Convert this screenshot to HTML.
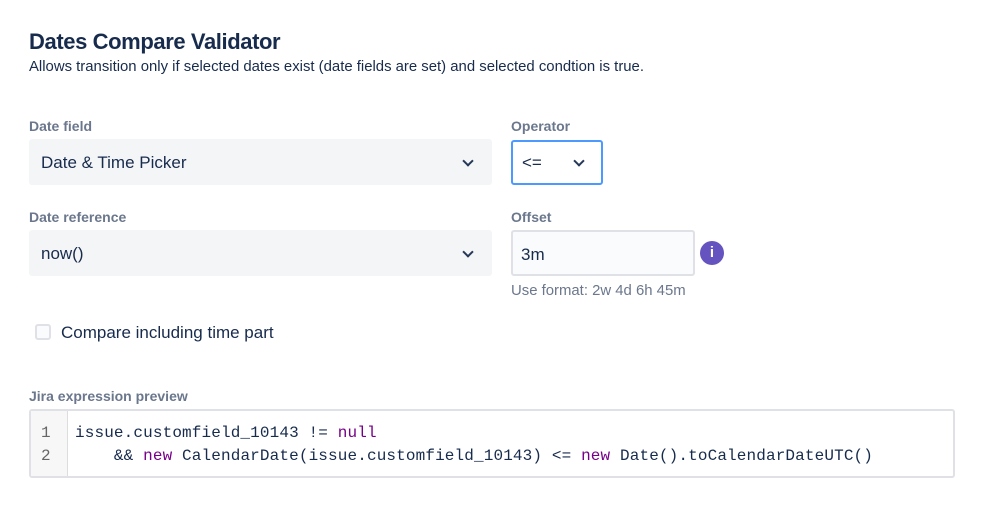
<!DOCTYPE html>
<html><head><style>
body{margin:0;background:#fff;font-family:"Liberation Sans",sans-serif;color:#172b4d;width:999px;height:515px;overflow:hidden;position:relative}
.a{position:absolute}
.lbl{font-size:14px;font-weight:bold;color:#6b778c}
.sel{background:#f4f5f7;border-radius:3px}
.chev{position:absolute;width:6px;height:6px;border-right:2px solid #253858;border-bottom:2px solid #253858;transform:rotate(45deg)}
.code{font-family:"Liberation Mono",monospace;font-size:16px;letter-spacing:0.13px}
.kw{color:#770088}
</style></head><body>
<div class="a" style="left:29px;top:29px;font-size:22px;font-weight:bold;color:#172b4d;letter-spacing:-0.4px">Dates Compare Validator</div>
<div class="a" style="left:29px;top:59px;font-size:14.9px">Allows transition only if selected dates exist (date fields are set) and selected condtion is true.</div>

<div class="a lbl" style="left:29px;top:118px">Date field</div>
<div class="a sel" style="left:29px;top:139px;width:463px;height:46px"></div>
<div class="a" style="left:41px;top:153px;font-size:17px">Date &amp; Time Picker</div>
<div class="chev" style="left:464px;top:157px"></div>

<div class="a lbl" style="left:511px;top:118px">Operator</div>
<div class="a" style="left:511px;top:140px;width:88px;height:41px;border:2px solid #4c9aff;border-radius:3px;background:#fff"></div>
<div class="a" style="left:522px;top:153px;font-size:17px">&lt;=</div>
<div class="chev" style="left:575px;top:157px"></div>

<div class="a lbl" style="left:29px;top:209px">Date reference</div>
<div class="a sel" style="left:29px;top:230px;width:463px;height:46px"></div>
<div class="a" style="left:41px;top:244px;font-size:17px">now()</div>
<div class="chev" style="left:464px;top:248px"></div>

<div class="a lbl" style="left:511px;top:209px">Offset</div>
<div class="a" style="left:511px;top:230px;width:180px;height:42px;border:2px solid #dfe1e6;border-radius:3px;background:#fafbfc"></div>
<div class="a" style="left:521px;top:245px;font-size:17px">3m</div>
<div class="a" style="left:700px;top:241px;width:24px;height:24px;border-radius:50%;background:#6554c0;color:#fff;font-weight:bold;font-size:15px;text-align:center;line-height:24px">i</div>
<div class="a" style="left:511px;top:283px;font-size:14.9px;color:#6b778c">Use format: 2w 4d 6h 45m</div>

<div class="a" style="left:35px;top:324px;width:12px;height:12px;border:2px solid #dfe1e6;border-radius:3px;background:#fafbfc"></div>
<div class="a" style="left:61px;top:323px;font-size:17px">Compare including time part</div>

<div class="a lbl" style="left:29px;top:388px">Jira expression preview</div>
<div class="a" style="left:29px;top:409px;width:922px;height:65px;border:2px solid #dfe1e6;border-radius:3px;background:#fff"></div>
<div class="a" style="left:31px;top:411px;width:36px;height:65px;background:#f7f7f7;border-right:1px solid #ddd"></div>
<div class="a code" style="left:41px;top:422px;line-height:23px;color:#666">1<br>2</div>
<div class="a code" style="left:75px;top:422px;line-height:23px;white-space:pre;color:#172b4d">issue.customfield_10143 != <span class="kw">null</span>
    &amp;&amp; <span class="kw">new</span> CalendarDate(issue.customfield_10143) &lt;= <span class="kw">new</span> Date().toCalendarDateUTC()</div>
</body></html>
